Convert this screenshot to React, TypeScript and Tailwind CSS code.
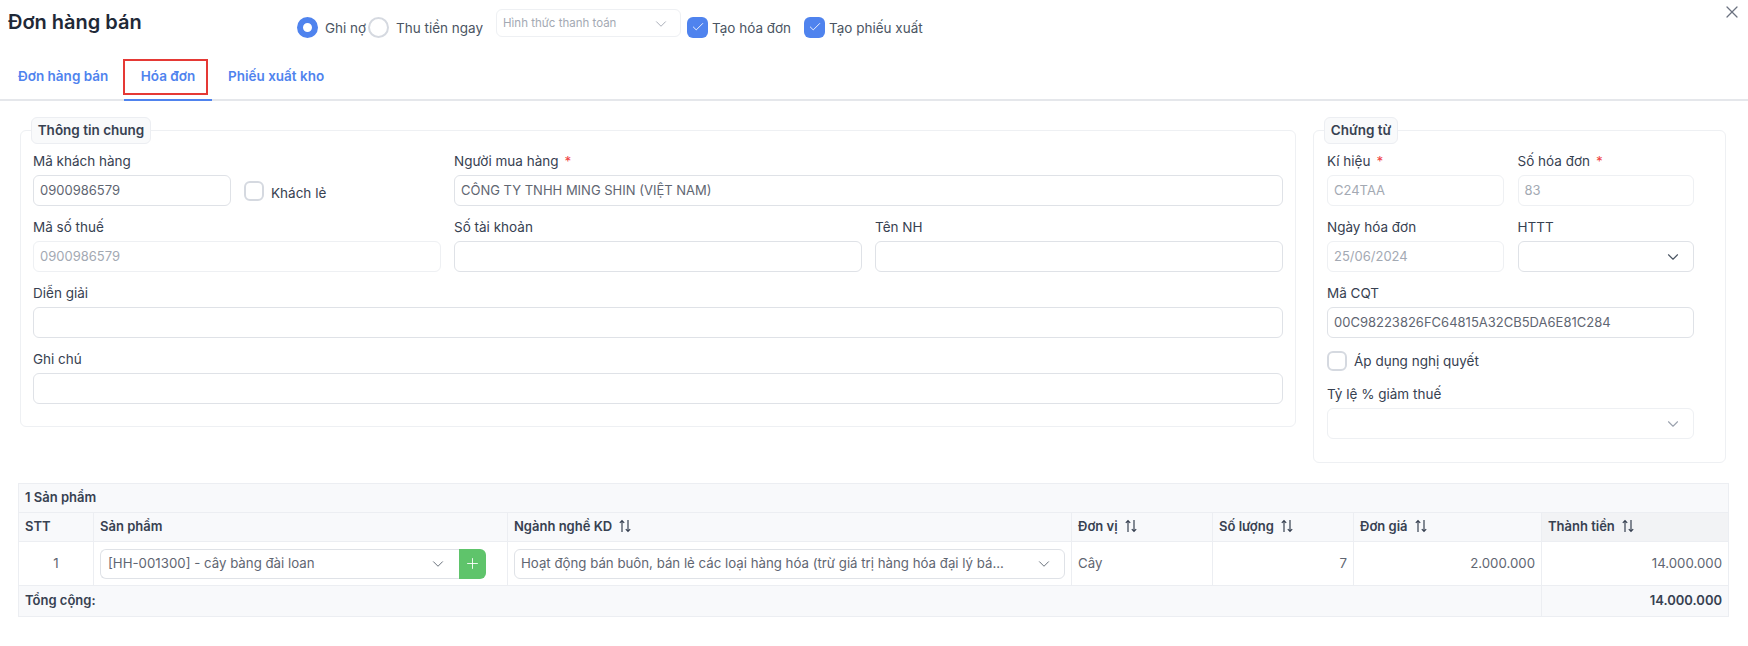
import React from "react";
import { Check, ChevronDown, Plus, X } from "lucide-react";

const Label = ({ text, required }: { text: string; required?: boolean }) => (
  <div className="h-5 mb-[4px] text-[13.5px] leading-5 text-[#374151] whitespace-nowrap">
    {text}
    {required && <span className="ml-[6px] text-[#ef4444]">*</span>}
  </div>
);

const Input = ({ value, disabled, className }: { value?: string; disabled?: boolean; className?: string }) => (
  <div
    className={`h-[31px] rounded-md border px-[6px] text-[13px] leading-[29px] whitespace-nowrap ${
      disabled ? "border-[#eef0f3] text-[#a3a9b3]" : "border-[#dfe2e7] text-[#5f6672]"
    } ${className ?? ""}`}
  >
    {value}
  </div>
);

const Select = ({ muted }: { muted?: boolean }) => (
  <div
    className={`h-[31px] rounded-md border flex items-center justify-end pr-[11px] ${
      muted ? "border-[#eef0f3] text-[#9ca3af]" : "border-[#dfe2e7] text-[#4b5563]"
    }`}
  >
    <ChevronDown size={18} strokeWidth={1.5} />
  </div>
);

const Field = ({ label, required, value, disabled, className }: { label: string; required?: boolean; value?: string; disabled?: boolean; className?: string }) => (
  <div className={className}>
    <Label text={label} required={required} />
    <Input value={value} disabled={disabled} />
  </div>
);

const Checkbox = ({ checked }: { checked?: boolean }) =>
  checked ? (
    <span className="w-[21px] h-[21px] shrink-0 rounded-md bg-[#4f83ee] flex items-center justify-center text-white">
      <Check size={14} strokeWidth={1.5} />
    </span>
  ) : (
    <span className="w-[20px] h-[20px] shrink-0 rounded-md border-2 border-[#d5d9e0] bg-white" />
  );

const Legend = ({ text, className }: { text: string; className: string }) => (
  <div className={`absolute top-[-14px] h-[27px] rounded-md border border-[#eceef2] bg-[#f9fafb] text-[13.5px] font-semibold leading-[25px] text-[#374151] text-center ${className}`}>
    {text}
  </div>
);

const SortIcon = () => (
  <svg width="14" height="14" viewBox="0 0 14 14" fill="none" stroke="#374151" strokeWidth="1.2" className="inline-block ml-[6px] align-[-2px]">
    <path d="M4 13V1.5M1.8 3.8 4 1.5l2.2 2.3" />
    <path d="M10 1v11.5M7.8 10.2 10 12.5l2.2-2.3" />
  </svg>
);

const Th = ({ text, sort, className }: { text: string; sort?: boolean; className?: string }) => (
  <th className={`h-[29px] border border-[#eceef2] px-[6px] text-left text-[13px] font-semibold text-[#374151] whitespace-nowrap ${className ?? "bg-[#f8f9fb]"}`}>
    {text}
    {sort && <SortIcon />}
  </th>
);

export default function App() {
  return (
    <div className="relative w-[1748px] h-[646px] overflow-hidden bg-white font-['Inter',sans-serif]">
      {/* header */}
      <div className="flex items-start h-[48px]">
        <h1 className="ml-[8px] mt-[8px] w-[289px] text-[20px] leading-7 font-semibold text-[#1f2937]">Đơn hàng bán</h1>
        <div className="mt-[9px] flex items-start text-[13.5px] text-[#4b5563]">
          <div className="mt-[7px] flex items-center">
            <span className="w-[21px] h-[21px] rounded-full border-[6px] border-[#4f83ee] bg-white" />
            <span className="ml-[7px] w-[43px] pt-[2px]">Ghi nợ</span>
            <span className="w-[21px] h-[21px] rounded-full border-2 border-[#d5d9e0] bg-white" />
            <span className="ml-[7px] w-[100px] pt-[2px]">Thu tiền ngay</span>
          </div>
          <div className="w-[185px] h-[28px] rounded-md border border-[#eef0f3] flex items-center justify-between pl-[6px] pr-[10px] pt-[1px] text-[11.5px] text-[#a3a9b3]">
            Hình thức thanh toán
            <ChevronDown size={18} strokeWidth={1.25} />
          </div>
          <div className="mt-[7px] ml-[6px] flex items-center">
            <Checkbox checked />
            <span className="ml-[4px] w-[92px] pt-[2px]">Tạo hóa đơn</span>
            <Checkbox checked />
            <span className="ml-[4px] pt-[2px]">Tạo phiếu xuất</span>
          </div>
        </div>
        <X size={20} strokeWidth={1.5} className="absolute top-[2px] right-[6px] text-[#6b7280]" />
      </div>

      {/* tabs */}
      <div className="relative flex h-[53px] border-b-2 border-[#e5e7eb] text-[13.5px] font-semibold text-[#4f83ee]">
        <div className="ml-[18px] w-[106px] pt-[18px]">Đơn hàng bán</div>
        <div className="relative w-[88px] -mb-[2px] border-b-2 border-[#4f83ee] pt-[18px] text-center">
          Hóa đơn
          <span className="absolute left-[-1px] top-[11px] w-[85px] h-[36px] border-2 border-[#e53935]" />
        </div>
        <div className="ml-[16px] pt-[18px]">Phiếu xuất kho</div>
      </div>

      {/* form panels */}
      <div className="mt-[29px] ml-[20px] flex items-start gap-[17px]">
        <div className="relative w-[1276px] rounded-md border border-[#eef0f3] pt-[20px] px-[12px] pb-[22px]">
          <Legend text="Thông tin chung" className="left-[10px] w-[120px]" />
          <div className="grid grid-cols-3 gap-x-[13px] gap-y-[11px]">
            <div className="flex items-start">
              <Field label="Mã khách hàng" value="0900986579" className="w-[198px]" />
              <div className="ml-[13px] mt-[27px] flex items-center">
                <Checkbox />
                <span className="ml-[7px] mt-[5px] text-[13.5px] text-[#374151]">Khách lẻ</span>
              </div>
            </div>
            <Field label="Người mua hàng" required value="CÔNG TY TNHH MING SHIN (VIỆT NAM)" className="col-span-2" />
            <Field label="Mã số thuế" value="0900986579" disabled />
            <Field label="Số tài khoản" />
            <Field label="Tên NH" />
            <Field label="Diễn giải" className="col-span-3" />
            <Field label="Ghi chú" className="col-span-3" />
          </div>
        </div>

        <div className="relative w-[413px] rounded-md border border-[#eef0f3] pt-[20px] pl-[13px] pr-[31px] pb-[23px]">
          <Legend text="Chứng từ" className="left-[10px] w-[74px]" />
          <div className="grid grid-cols-2 gap-x-[14px] gap-y-[11px]">
            <Field label="Kí hiệu" required value="C24TAA" disabled />
            <Field label="Số hóa đơn" required value="83" disabled />
            <Field label="Ngày hóa đơn" value="25/06/2024" disabled />
            <div>
              <Label text="HTTT" />
              <Select />
            </div>
            <Field label="Mã CQT" value="00C98223826FC64815A32CB5DA6E81C284" className="col-span-2" />
            <div className="col-span-2 h-[24px] pt-[2px] flex items-start">
              <Checkbox />
              <span className="ml-[7px] text-[13.5px] leading-5 text-[#374151]">Áp dụng nghị quyết</span>
            </div>
            <div className="col-span-2">
              <Label text="Tỷ lệ % giảm thuế" />
              <Select muted />
            </div>
          </div>
        </div>
      </div>

      {/* product table */}
      <table className="mt-[20px] ml-[18px] w-[1710px] table-fixed border-collapse">
        <colgroup>
          <col className="w-[75px]" />
          <col className="w-[414px]" />
          <col className="w-[564px]" />
          <col className="w-[141px]" />
          <col className="w-[141px]" />
          <col className="w-[188px]" />
          <col className="w-[187px]" />
        </colgroup>
        <thead>
          <tr>
            <th colSpan={7} className="h-[29px] border border-[#eceef2] bg-[#f8f9fb] px-[6px] text-left text-[13px] font-semibold text-[#374151]">
              1 Sản phẩm
            </th>
          </tr>
          <tr>
            <Th text="STT" />
            <Th text="Sản phẩm" />
            <Th text="Ngành nghề KD" sort />
            <Th text="Đơn vị" sort />
            <Th text="Số lượng" sort />
            <Th text="Đơn giá" sort />
            <Th text="Thành tiền" sort className="bg-[#f2f3f5]" />
          </tr>
        </thead>
        <tbody className="text-[13.25px] text-[#5f6672]">
          <tr className="h-[44px]">
            <td className="border border-[#eceef2] text-center">1</td>
            <td className="border border-[#eceef2] px-[6px]">
              <div className="flex h-[30px] w-[386px]">
                <div className="flex-1 flex items-center justify-between rounded-l-md border border-r-0 border-[#dfe2e7] pl-[7px] pr-[12px]">
                  [HH-001300] - cây bàng đài loan
                  <ChevronDown size={18} strokeWidth={1.25} />
                </div>
                <div className="w-[27px] rounded-r-md bg-[#5fc46b] flex items-center justify-center text-white">
                  <Plus size={17} strokeWidth={1.25} />
                </div>
              </div>
            </td>
            <td className="border border-[#eceef2] px-[6px]">
              <div className="flex h-[30px] items-center justify-between rounded-md border border-[#dfe2e7] pl-[6px] pr-[11px] whitespace-nowrap">
                Hoạt động bán buôn, bán lẻ các loại hàng hóa (trừ giá trị hàng hóa đại lý bá...
                <ChevronDown size={18} strokeWidth={1.25} />
              </div>
            </td>
            <td className="border border-[#eceef2] px-[6px]">Cây</td>
            <td className="border border-[#eceef2] px-[6px] text-right">7</td>
            <td className="border border-[#eceef2] px-[6px] text-right">2.000.000</td>
            <td className="border border-[#eceef2] px-[6px] text-right">14.000.000</td>
          </tr>
        </tbody>
        <tfoot>
          <tr className="h-[31px] bg-[#f8f9fb] text-[13px] font-semibold text-[#374151]">
            <td colSpan={6} className="border border-[#eceef2] px-[6px]">Tổng cộng:</td>
            <td className="border border-[#eceef2] px-[6px] text-right">14.000.000</td>
          </tr>
        </tfoot>
      </table>
    </div>
  );
}
